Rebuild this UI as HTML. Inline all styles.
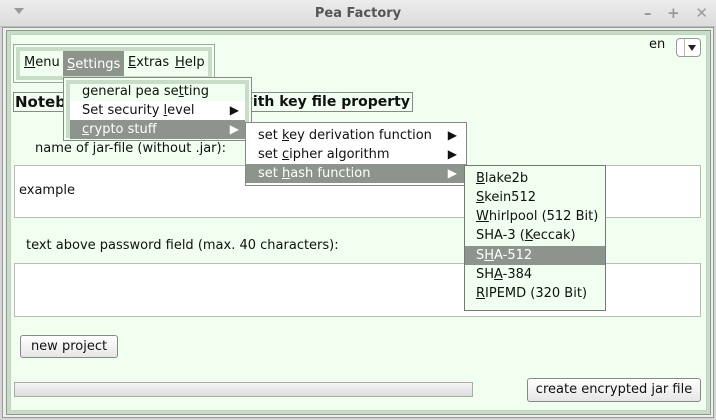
<!DOCTYPE html><html><head><style>
*{margin:0;padding:0;box-sizing:border-box}
body{width:716px;height:420px;overflow:hidden;background:#d6d6d6;font-family:"DejaVu Sans","Liberation Sans",sans-serif;font-size:13px;color:#111;position:relative}
.a{position:absolute}
u{text-decoration:underline}
.it{position:absolute;height:19px;line-height:19px;white-space:nowrap}
.hl{background:#8c948c;color:#fff}
.arr{position:absolute;right:0;font-size:12px}
</style></head><body>
<div class="a" style="left:0;top:0;width:716px;height:27px;background:linear-gradient(#ececec,#dcdcdc);border-bottom:1px solid #bbb"></div>
<div class="a" style="left:14px;top:8px;width:0;height:0;border-left:5px solid transparent;border-right:5px solid transparent;border-top:6px solid #999"></div>
<div class="a" style="left:0;top:6px;width:716px;text-align:center;font-weight:bold;color:#555;font-size:13px">Pea Factory</div>
<div class="a" style="left:644px;top:4px;color:#999;font-size:15px;font-weight:bold">–&nbsp;&nbsp;&nbsp;+&nbsp;&nbsp;&nbsp;✕</div>
<div class="a" style="left:2px;top:27px;width:712px;height:391px;background:#eee;border:1px solid #999"></div>
<div class="a" style="left:6px;top:30px;width:705px;height:385px;background:#c8dcc8;border:1px solid #8a9a8a"></div>
<div class="a" style="left:10px;top:34px;width:697px;height:377px;background:#f0fff0;border:1px solid #c0d4c0"></div>
<div class="a" style="left:649px;top:37px">en</div>
<div class="a" style="left:676px;top:38px;width:25px;height:19px;background:#fff;border:1px solid #999;border-radius:4px"><div class="a" style="left:7px;top:0;height:17px;border-left:1px solid #bbb"></div><div class="a" style="left:11px;top:6px;border-left:4px solid transparent;border-right:4px solid transparent;border-top:6px solid #222"></div></div>
<div class="a" style="left:13px;top:44px;width:202px;height:39px;border:1px solid #9aaa9a;background:#f0fff0"></div>
<div class="a" style="left:16px;top:47px;width:196px;height:33px;border:4px solid #c8dcc8;background:#f0fff0"></div>
<div class="it" style="left:24px;top:53px"><u>M</u>enu</div>
<div class="it hl" style="left:63px;top:51px;width:61px;height:25px;line-height:23px;padding-left:4px;padding-top:2px"><u>S</u>ettings</div>
<div class="it" style="left:128px;top:53px"><u>E</u>xtras</div>
<div class="it" style="left:175px;top:53px"><u>H</u>elp</div>
<div class="a" style="left:13px;top:92px;width:400px;height:20px;border:1px solid #888;font-weight:bold;font-size:15px;line-height:18px;padding-left:1px;white-space:nowrap;overflow:hidden">Notebook<span style="position:absolute;right:2px;top:0;font-size:14px">with key file property</span></div>
<div class="a" style="left:35px;top:141px">name of jar-file (without .jar):</div>
<div class="a" style="left:14px;top:165px;width:687px;height:53px;background:#fff;border:1px solid #bbb"></div>
<div class="a" style="left:19px;top:183px">example</div>
<div class="a" style="left:26px;top:238px">text above password field (max. 40 characters):</div>
<div class="a" style="left:14px;top:263px;width:687px;height:54px;background:#fff;border:1px solid #bbb"></div>
<div class="a" style="left:20px;top:335px;width:98px;height:23px;border:1px solid #888;border-radius:3px;background:linear-gradient(#fff,#e6e6e6);text-align:center;line-height:21px">new project</div>
<div class="a" style="left:14px;top:382px;width:459px;height:15px;border:1px solid #aaa;background:linear-gradient(#f4f4f4,#ddd)"></div>
<div class="a" style="left:527px;top:378px;width:174px;height:24px;border:1px solid #888;border-radius:3px;background:linear-gradient(#fff,#e6e6e6);text-align:center;line-height:22px">create encrypted jar file</div>
<div class="a" style="left:63px;top:77px;width:189px;height:64px;border:1px solid #888;background:#f0fff0"></div>
<div class="a" style="left:66px;top:80px;width:183px;height:58px;border:4px solid #c8dcc8;background:#f0fff0"></div>
<div class="it" style="left:70px;top:82px;width:175px;padding-left:12px">general pea se<u>t</u>ting</div>
<div class="it" style="left:70px;top:101px;width:175px;padding-left:12px;background:#fff">Set security <u>l</u>evel<span class="arr" style="right:6px">▶</span></div>
<div class="it hl" style="left:70px;top:120px;width:175px;padding-left:12px"><u>c</u>rypto stuff<span class="arr" style="right:6px">▶</span></div>
<div class="a" style="left:245px;top:122px;width:222px;height:64px;border:1px solid #888;background:#fff"></div>
<div class="it" style="left:246px;top:126px;width:220px;padding-left:12px">set <u>k</u>ey derivation function<span class="arr" style="right:9px">▶</span></div>
<div class="it" style="left:246px;top:145px;width:220px;padding-left:12px">set <u>c</u>ipher algorithm<span class="arr" style="right:9px">▶</span></div>
<div class="it hl" style="left:246px;top:164px;width:220px;padding-left:12px">set <u>h</u>ash function<span class="arr" style="right:9px">▶</span></div>
<div class="a" style="left:464px;top:165px;width:142px;height:146px;border:1px solid #777;background:#f0fff0"></div>
<div class="it" style="left:465px;top:169px;width:140px;padding-left:11px"><u>B</u>lake2b</div>
<div class="it" style="left:465px;top:188px;width:140px;padding-left:11px"><u>S</u>kein512</div>
<div class="it" style="left:465px;top:207px;width:140px;padding-left:11px"><u>W</u>hirlpool (512 Bit)</div>
<div class="it" style="left:465px;top:226px;width:140px;padding-left:11px">SHA-3 (<u>K</u>eccak)</div>
<div class="it hl" style="left:465px;top:246px;width:140px;padding-left:11px">S<u>H</u>A-512</div>
<div class="it" style="left:465px;top:265px;width:140px;padding-left:11px">SH<u>A</u>-384</div>
<div class="it" style="left:465px;top:284px;width:140px;padding-left:11px"><u>R</u>IPEMD (320 Bit)</div>
</body></html>
